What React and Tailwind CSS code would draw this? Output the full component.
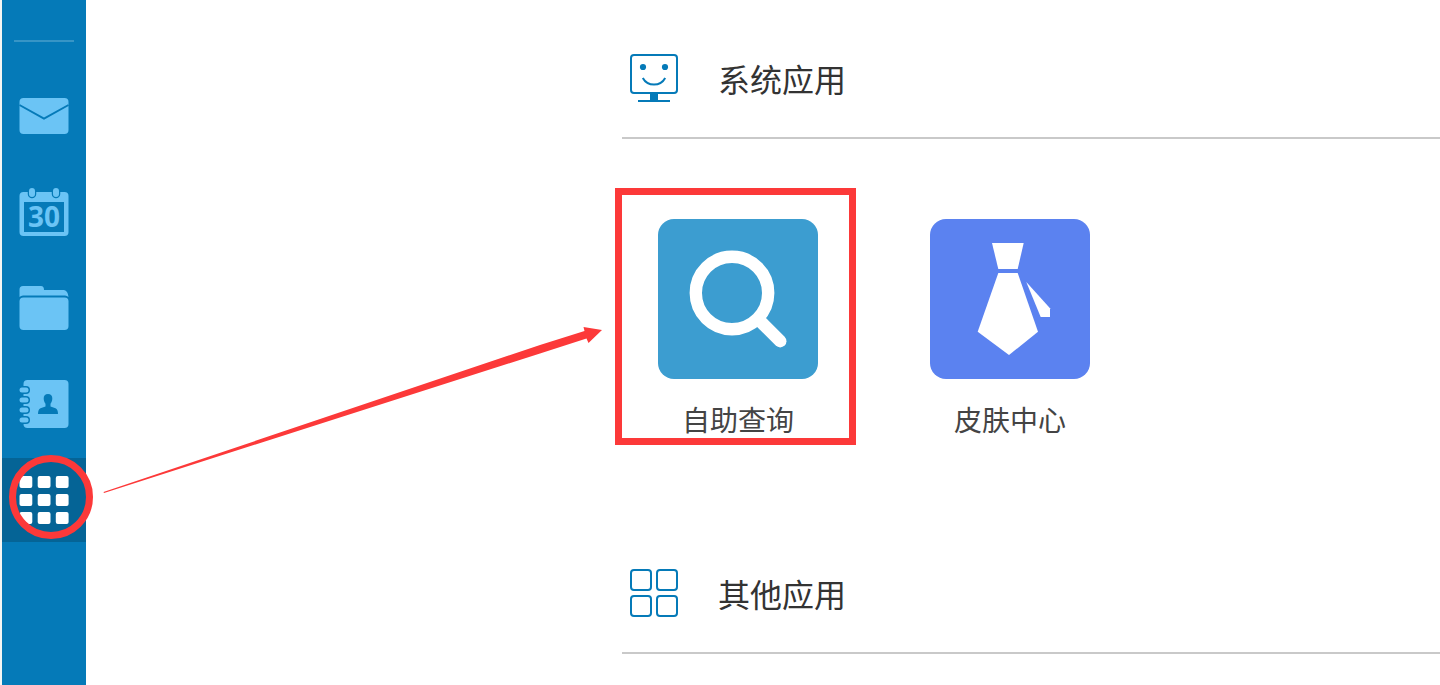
import { useState } from "react";

function MailIcon() {
  return (
    <svg viewBox="0 0 48 48" className="size-12 overflow-visible">
      <rect x="-0.5" y="6" width="49" height="36" rx="4" fill="#6bc4f5" />
      <path d="M-0.5 13 L24 26.7 L48.5 13" fill="none" stroke="#057ab8" strokeWidth="1.900" />
    </svg>
  );
}

function CalendarIcon() {
  return (
    <svg viewBox="0 0 48 48" className="size-12 overflow-visible">
      <rect x="-0.5" y="4" width="49" height="44" rx="4" fill="#6bc4f5" />
      <rect x="4" y="14" width="40" height="30" fill="#057ab8" />
      <path d="M12 3v3M36 3v3" stroke="#057ab8" strokeWidth="8.500" strokeLinecap="round" />
      <path d="M12 3v3M36 3v3" stroke="#6bc4f5" strokeWidth="6" strokeLinecap="round" />
      <text
        x="24"
        y="39"
        textAnchor="middle"
        fill="#6bc4f5"
        className="font-['Open_Sans',sans-serif] text-[28px] font-bold"
      >
        30
      </text>
    </svg>
  );
}

function FolderIcon() {
  return (
    <svg viewBox="0 0 48 48" className="size-12 overflow-visible">
      <path d="M-0.5 13V5.5Q-0.5 2 3 2H21Q24 2 24 6H44Q48 7 48.5 13Q47 11.5 45 11.5H3Q1 11.5 -0.5 13Z" fill="#6bc4f5" />
      <rect x="-0.5" y="13.5" width="49" height="32.5" rx="4" fill="#6bc4f5" />
    </svg>
  );
}

function ContactsIcon() {
  return (
    <svg viewBox="0 0 48 48" className="size-12 overflow-visible">
      <rect x="3.5" width="45" height="48" rx="4" fill="#6bc4f5" />
      {[10, 20, 30, 40].map((y) => (
        <g key={y}>
          <rect x="-2" y={y - 4} width="12" height="8" rx="4" fill="#057ab8" />
          <rect x="-0.5" y={y - 2.5} width="9" height="5" rx="2.5" fill="#6bc4f5" />
        </g>
      ))}
      <path
        d="M28 14C30.800 14 32.500 16 32.300 18.800C32.200 21 31.500 22.500 30.500 23.700V26.500L35.500 28.300Q38 29.500 38 34H18Q18 29.500 20.500 28.300L25.500 26.500V23.700C24.500 22.500 23.800 21 23.700 18.800C23.500 16 25.200 14 28 14Z"
        fill="#057ab8"
      />
    </svg>
  );
}

function GridIcon() {
  return (
    <svg viewBox="0 0 48 48" className="size-12 overflow-visible">
      {[0, 18, 36].map((y) =>
        [-0.5, 17.7, 35.8].map((x) => (
          <rect key={`${x}-${y}`} x={x} y={y} width="12.8" height="12" rx="2" fill="#fff" />
        ))
      )}
    </svg>
  );
}

function MonitorIcon() {
  return (
    <svg viewBox="0 0 48 48" className="size-12" fill="none" stroke="#057ab8" strokeWidth="2">
      <rect x="1" y="1" width="46" height="38" rx="3" />
      <circle cx="13" cy="13" r="3.100" fill="#057ab8" stroke="none" />
      <circle cx="35" cy="13" r="3.100" fill="#057ab8" stroke="none" />
      <path d="M12.800 24A12.800 12.800 0 0 0 35.200 24" />
      <path d="M20 40h8v6h12v2H8v-2h12z" fill="#057ab8" stroke="none" />
    </svg>
  );
}

function SquaresIcon() {
  return (
    <svg viewBox="0 0 48 48" className="size-12" fill="none" stroke="#057ab8" strokeWidth="2">
      <rect x="1" y="1" width="20" height="20" rx="3" />
      <rect x="27" y="1" width="20" height="20" rx="3" />
      <rect x="1" y="27" width="20" height="20" rx="3" />
      <rect x="27" y="27" width="20" height="20" rx="3" />
    </svg>
  );
}

function SearchArt() {
  return (
    <svg viewBox="0 0 160 160" className="size-40 rounded-2xl bg-[#3c9dd0]" fill="none" stroke="#fff">
      <circle cx="74" cy="74" r="36.200" strokeWidth="12.400" />
      <path d="M102 102L122.200 122.200" strokeWidth="12.500" strokeLinecap="round" />
    </svg>
  );
}

function TieArt() {
  return (
    <svg viewBox="0 0 160 160" className="size-40 rounded-2xl bg-[#5b82f0]" fill="#fff">
      <path d="M62 24H93.700L87.700 50H68.300Z" />
      <path d="M68.300 54H87.700L108 112.700L79 136L47.700 112.700Z" />
      <path d="M96.300 63L120 89.300V98H110.700Z" />
    </svg>
  );
}

const menu = [
  { id: "mail", icon: <MailIcon /> },
  { id: "calendar", icon: <CalendarIcon /> },
  { id: "folder", icon: <FolderIcon /> },
  { id: "contacts", icon: <ContactsIcon /> },
  { id: "apps", icon: <GridIcon /> },
];

function Sidebar() {
  const [active, setActive] = useState("apps");

  return (
    <nav className="relative z-10 w-[86px] shrink-0 border-l-2 border-[#f4f6f4] bg-[#057ab8]">
      <div className="mx-3 mt-10 mb-8 h-0.5 bg-[#3795c6]" />
      <div className="flex flex-col gap-3">
        {menu.map((item) => (
          <button
            key={item.id}
            type="button"
            aria-label={item.id}
            onClick={() => setActive(item.id)}
            className={`relative flex h-21 w-full items-center justify-center ${
              active === item.id ? "bg-[#056496]" : ""
            }`}
          >
            {item.icon}
            {item.id === "apps" && (
              <span className="absolute -top-[3px] left-[7px] size-21 rounded-full border-7 border-[#fc3939]" />
            )}
          </button>
        ))}
      </div>
    </nav>
  );
}

function SectionHeader({ icon, title }) {
  return (
    <div className="flex h-[120px] items-center gap-10 border-b-2 border-[#c9c9c9] pl-2">
      {icon}
      <h2 className="text-[32px] leading-12 text-[#333]">{title}</h2>
    </div>
  );
}

function AppTile({ art, name, highlight }) {
  return (
    <a href="#" className="relative flex w-40 flex-col items-center gap-5">
      {art}
      <span className="text-[28px] leading-10 text-[#444]">{name}</span>
      {highlight && (
        <span className="absolute -top-[31px] -left-[43px] h-[257px] w-[241px] border-7 border-[#fc3939]" />
      )}
    </a>
  );
}

export default function App() {
  return (
    <div className="relative flex min-h-screen overflow-hidden bg-white font-['Noto_Sans_CJK_SC',sans-serif]">
      <Sidebar />

      <main className="min-w-0 flex-1 pt-[19px] pl-[536px]">
        <section>
          <SectionHeader icon={<MonitorIcon />} title="系统应用" />
          <div className="flex gap-28 pt-20 pb-[95px] pl-9">
            <AppTile art={<SearchArt />} name="自助查询" highlight />
            <AppTile art={<TieArt />} name="皮肤中心" />
          </div>
        </section>

        <section>
          <SectionHeader icon={<SquaresIcon />} title="其他应用" />
        </section>
      </main>

      {/* Arrow from the apps button to the highlighted tile */}
      <svg
        viewBox="0 0 500 168"
        className="pointer-events-none absolute top-[326px] left-[103px] z-20 h-[168px] w-[500px]"
      >
        <path
          d="M0.500 166L437 19L481.500 5L480.500 1L499 4L485.500 17L483.500 12.500L437 27.500L1 167Z"
          fill="#fc3939"
        />
      </svg>
    </div>
  );
}
